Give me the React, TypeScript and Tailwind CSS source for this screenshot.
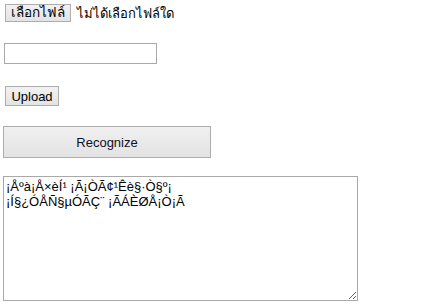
import React from "react";

export default function App() {
  const text =
    "¡Åºà¡Å×èÍ¹ ¡Ã¡ÒÃ¢¹Êè§·Ò§º¡\n¡Í§¿ÓÅÑ§µÓÃÇ¨ ¡ÃÁÈØÅ¡Ò¡Ã";
  return (
    <div className="w-[438px] h-[306px] bg-white text-black font-['Liberation_Sans',Arial,'Noto_Sans',sans-serif] text-[13px] font-normal flex flex-col items-start overflow-hidden">
      <div className="mt-[4px] ml-[5px] flex items-center">
        <button className="h-[18px] w-[66px] border border-[#adadad] bg-gradient-to-b from-[#f2f2f2] to-[#e3e3e3] text-[13.5px] font-normal leading-none flex items-center justify-center text-black">
          เลือกไฟล์
        </button>
        <span className="ml-[6px] text-[13px] font-normal leading-none">ไม่ได้เลือกไฟล์ใด</span>
      </div>
      <input
        type="text"
        className="mt-[21px] ml-[4px] w-[153px] h-[21px] border border-[#a9a9a9] bg-white outline-none px-[2px]"
      />
      <button className="mt-[22px] ml-[5px] w-[54px] h-[20px] border border-[#adadad] bg-gradient-to-b from-[#f2f2f2] to-[#e3e3e3] text-[13px] font-normal leading-none flex items-center justify-center text-black">
        Upload
      </button>
      <button className="mt-[20px] ml-[3px] w-[208px] h-[32px] border border-[#adadad] bg-gradient-to-b from-[#f0f0f0] to-[#e3e3e3] text-[13px] font-normal leading-none flex items-center justify-center text-[#111122]">
        Recognize
      </button>
      <textarea
        readOnly
        defaultValue={text}
        className="mt-[18px] ml-[3px] w-[355px] h-[125px] border border-[#a9a9a9] bg-white p-[2px] text-[13px] font-normal leading-[15px] font-['Liberation_Sans',Arial,sans-serif] outline-none resize"
      />
    </div>
  );
}
